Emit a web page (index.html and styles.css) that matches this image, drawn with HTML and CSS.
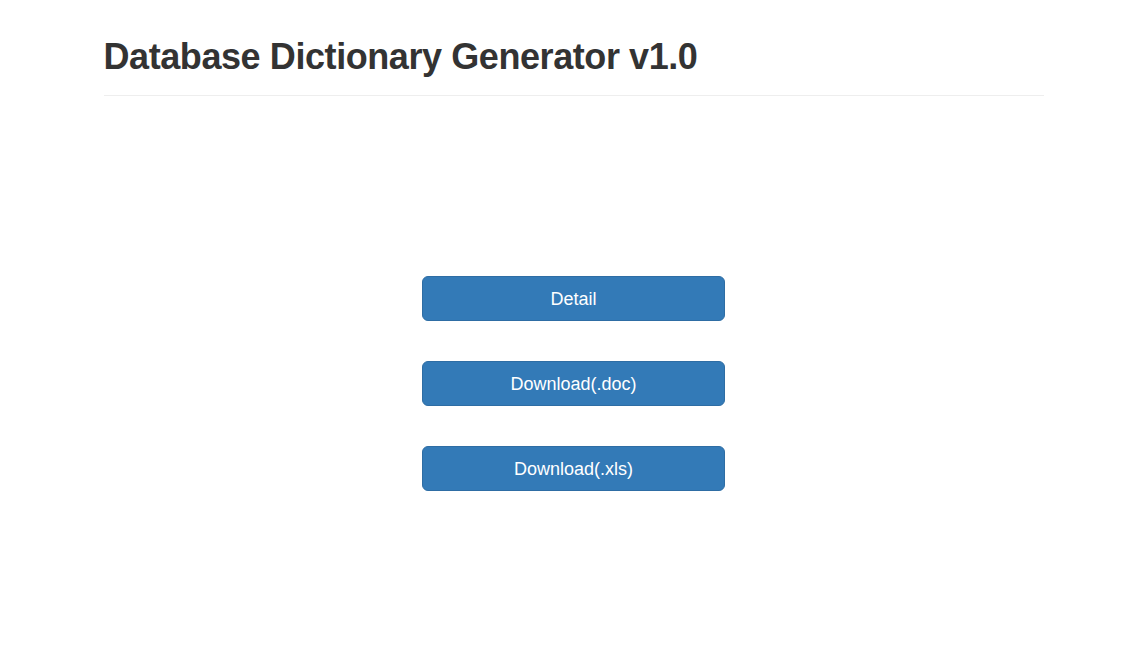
FILE: index.html
```html
<!DOCTYPE html>
<html lang="en">
<head>
<meta charset="utf-8">
<title>Database Dictionary Generator v1.0</title>
<link rel="stylesheet" href="styles.css">
</head>
<body>
<div class="container">
  <div class="page-header">
    <h1>Database Dictionary Generator v1.0</h1>
  </div>
  <div class="actions">
    <a class="btn" href="#">Detail</a>
    <a class="btn" href="#">Download(.doc)</a>
    <a class="btn" href="#">Download(.xls)</a>
  </div>
</div>
</body>
</html>
```
FILE: styles.css
```css
html, body {
  margin: 0;
  padding: 0;
  background: #fff;
}
body {
  font-family: "Liberation Sans", Arial, sans-serif;
  color: #333;
}
.container {
  width: 940px;
  margin: 0 auto;
  padding: 0 15px;
}
.page-header {
  margin-top: 37px;
  padding-bottom: 9px;
  border-bottom: 1px solid #eee;
}
.page-header h1 {
  margin: 0 0 9px;
  font-size: 36px;
  line-height: 40px;
  font-weight: 700;
  letter-spacing: -0.42px;
  color: #333;
}
.actions {
  display: flex;
  flex-direction: column;
  align-items: center;
  gap: 40px;
  padding-top: 180px;
}
.btn {
  display: block;
  box-sizing: border-box;
  width: 303px;
  height: 45px;
  padding: 11px 16px 9px;
  font-size: 18px;
  line-height: 23px;
  text-align: center;
  color: #fff;
  text-decoration: none;
  background: #337ab7;
  border: 1px solid #2e6da4;
  border-radius: 6px;
}
```
